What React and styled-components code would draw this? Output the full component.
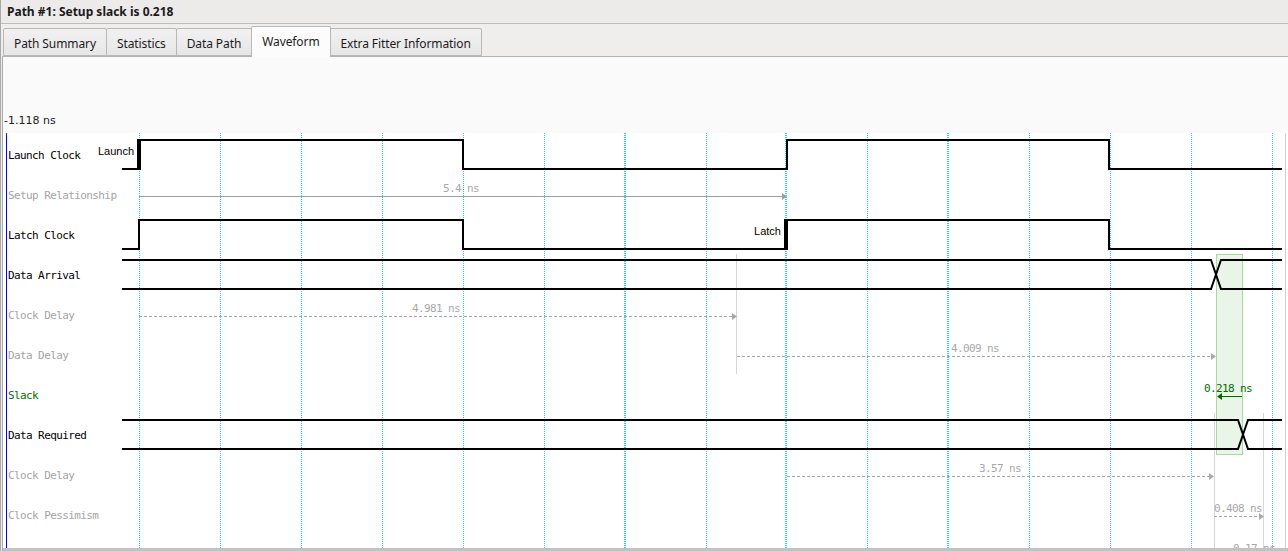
import styled, { createGlobalStyle } from "styled-components";

const GlobalStyle = createGlobalStyle`
  html, body {
    margin: 0;
    padding: 0;
    background: #ffffff;
  }
`;

const tabs = ["Path Summary", "Statistics", "Data Path", "Waveform", "Extra Fitter Information"];

const rows = [
  { name: "Launch Clock", tone: "main" },
  { name: "Setup Relationship", tone: "dim" },
  { name: "Latch Clock", tone: "main" },
  { name: "Data Arrival", tone: "main" },
  { name: "Clock Delay", tone: "dim" },
  { name: "Data Delay", tone: "dim" },
  { name: "Slack", tone: "slack" },
  { name: "Data Required", tone: "main" },
  { name: "Clock Delay", tone: "dim" },
  { name: "Clock Pessimism", tone: "dim" },
];

const toneColor = {
  main: "#000000",
  dim: "#a4a4a4",
  slack: "#007000",
};

// grid is every ~81px starting at the launch edge
const gridX = Array.from({ length: 15 }, (_, k) => Math.round(139 + 80.93 * k));
const majorGrid = [6, 8, 10];

const GREY = "#a8a8a8";
const GREEN = "#006f00";

const Arrow = ({ from, to, y, dashed, color = GREY }) => {
  const dir = to > from ? 1 : -1;
  const end = to - dir * 5;
  return (
    <g>
      <line
        x1={from}
        y1={y + 0.5}
        x2={end}
        y2={y + 0.5}
        stroke={color}
        strokeWidth="1"
        strokeDasharray={dashed ? "3 2" : undefined}
      />
      <polygon
        points={`${end},${y - 3} ${to},${y + 0.5} ${end},${y + 4}`}
        fill={color}
      />
    </g>
  );
};

const Note = ({ x, y, color = GREY, children }) => (
  <WaveText x={x} y={y} fill={color} textAnchor="middle">
    {children}
  </WaveText>
);

const Waves = () => (
  <WaveSvg viewBox="3 133 1285 415" width="1285" height="415">
    {gridX.map((x, k) => (
      <line
        key={x}
        x1={majorGrid.includes(k) ? x : x + 0.5}
        y1="133"
        x2={majorGrid.includes(k) ? x : x + 0.5}
        y2="548"
        stroke="#14dcec"
        strokeWidth={majorGrid.includes(k) ? 2 : 1}
        strokeDasharray="1 1"
      />
    ))}

    {/* slack window */}
    <rect x="1216.5" y="254.5" width="26" height="200" fill="#e9f5e7" stroke="#a8d9a2" />

    {/* markers */}
    <line x1="736.5" y1="254" x2="736.5" y2="374" stroke="#d6d6d6" />
    <line x1="1214.5" y1="413" x2="1214.5" y2="548" stroke="#d6d6d6" />
    <line x1="1263.5" y1="413" x2="1263.5" y2="548" stroke="#d6d6d6" />
    <line x1="1285.5" y1="133" x2="1285.5" y2="548" stroke="#d0d0d0" />

    {/* launch clock */}
    <path
      d="M122 169 H139 V140 H463 V169 H787 V140 H1109 V169 H1282"
      fill="none"
      stroke="#000"
      strokeWidth="2"
    />
    <rect x="137" y="139" width="4" height="31" fill="#000" />
    <WaveLabel x="134" y="155" textAnchor="end">Launch</WaveLabel>

    {/* setup relationship */}
    <Arrow from={139} to={787} y={196} color="#a0a0a0" />
    <Note x={461} y={192}>5.4 ns</Note>

    {/* latch clock */}
    <path
      d="M122 249 H139 V220 H463 V249 H786 V220 H1109 V249 H1282"
      fill="none"
      stroke="#000"
      strokeWidth="2"
    />
    <rect x="784" y="219" width="4" height="31" fill="#000" />
    <WaveLabel x="781" y="235" textAnchor="end">Latch</WaveLabel>

    {/* data arrival */}
    <path d="M122 260 H1211 L1221 289 H1282" fill="none" stroke="#000" strokeWidth="2" />
    <path d="M122 289 H1211 L1221 260 H1282" fill="none" stroke="#000" strokeWidth="2" />

    {/* clock delay / data delay */}
    <Arrow from={139} to={737} y={316} dashed />
    <Note x={436} y={312}>4.981 ns</Note>
    <Arrow from={737} to={1216} y={356} dashed />
    <Note x={975} y={352}>4.009 ns</Note>

    {/* slack */}
    <Arrow from={1242} to={1217} y={396} color={GREEN} />
    <Note x={1228} y={392} color={GREEN}>0.218 ns</Note>

    {/* data required */}
    <path d="M122 420 H1238 L1248 449 H1282" fill="none" stroke="#000" strokeWidth="2" />
    <path d="M122 449 H1238 L1248 420 H1282" fill="none" stroke="#000" strokeWidth="2" />

    <Arrow from={787} to={1214} y={476} dashed />
    <Note x={1000} y={472}>3.57 ns</Note>
    <Arrow from={1214} to={1264} y={516} dashed />
    <Note x={1238} y={512}>0.408 ns</Note>
    <Note x={1251} y={552}>-0.17 ns</Note>
  </WaveSvg>
);

const App = () => {
  return (
    <Window>
      <GlobalStyle />
      <TitleBar>
        <Title>Path #1: Setup slack is 0.218</Title>
      </TitleBar>
      <TabBar>
        {tabs.map((t) => (
          <Tab key={t} $active={t === "Waveform"}>
            {t}
          </Tab>
        ))}
      </TabBar>
      <Panel>
        <Ruler>
          <RulerTime>-1.118 ns</RulerTime>
        </Ruler>
        <Plot>
          <LabelColumn>
            {rows.map((r, i) => (
              <RowLabel key={i} $tone={r.tone}>
                {r.name}
              </RowLabel>
            ))}
          </LabelColumn>
          <Waves />
          <Cursor>
            <svg width="7" height="4" viewBox="0 0 7 4">
              <polygon points="0,0 7,0 3.5,4" fill="#0000ff" />
            </svg>
          </Cursor>
        </Plot>
      </Panel>
    </Window>
  );
};

const Window = styled.div`
  width: 1288px;
  height: 551px;
  overflow: hidden;
  box-sizing: border-box;
  border-left: 1px solid #a9a9a9;
  padding-left: 1px;
  background: #efeeed;
  font-family: "Noto Sans", "Open Sans", sans-serif;
`;

const TitleBar = styled.div`
  height: 23px;
  border-bottom: 1px solid #bdbcbb;
  margin-left: -1px;
  background: #ecebea;
  display: flex;
  align-items: center;
  padding-left: 6px;
`;

const Title = styled.div`
  font-size: 12px;
  font-weight: 700;
  color: #1a1a1a;
`;

const TabBar = styled.div`
  height: 32px;
  display: flex;
  align-items: flex-end;
  padding-left: 1px;
  position: relative;
  z-index: 1;
`;

const Tab = styled.div`
  box-sizing: border-box;
  height: ${(p) => (p.$active ? "31px" : "28px")};
  margin-bottom: ${(p) => (p.$active ? "-1px" : "0")};
  padding: ${(p) => (p.$active ? "0 10px 2px" : "3px 10px 0")};
  border: 1px solid #b8b8b8;
  border-bottom: ${(p) => (p.$active ? "none" : "1px solid #b8b8b8")};
  border-radius: 2px 2px 0 0;
  margin-right: -1px;
  display: flex;
  align-items: center;
  font-size: 12px;
  letter-spacing: -0.1px;
  color: #1c1c1c;
  white-space: nowrap;
  background: ${(p) =>
    p.$active ? "#fcfcfc" : "linear-gradient(#f1f1f1, #e7e7e7)"};
`;

const Panel = styled.div`
  border-top: 1px solid #b3b3b3;
  border-left: 1px solid #a9a9a9;
  background: #fafafa;
`;

const Ruler = styled.div`
  height: 76px;
  display: flex;
  align-items: flex-end;
  padding-bottom: 5px;
  box-sizing: border-box;
`;

const RulerTime = styled.div`
  font-family: "DejaVu Sans", sans-serif;
  font-size: 11px;
  line-height: 14px;
  color: #222;
  padding-left: 1px;
`;

const Plot = styled.div`
  position: relative;
  height: 415px;
  background: #ffffff;
  border-bottom: 3px solid #c2c2c2;
  overflow: hidden;
`;

const LabelColumn = styled.div`
  display: flex;
  flex-direction: column;
  padding-top: 3px;
  padding-left: 5px;
  position: relative;
  z-index: 1;
`;

const RowLabel = styled.div`
  height: 40px;
  line-height: 40px;
  font-family: "DejaVu Sans Mono", monospace;
  font-size: 11px;
  letter-spacing: -0.6px;
  color: ${(p) => toneColor[p.$tone]};
`;

const WaveSvg = styled.svg`
  position: absolute;
  left: 0;
  top: 0;
  display: block;
`;

const WaveText = styled.text`
  font-family: "DejaVu Sans Mono", monospace;
  font-size: 11px;
  letter-spacing: -0.6px;
`;

const WaveLabel = styled.text`
  font-family: "Liberation Sans", Arial, sans-serif;
  font-size: 11px;
  fill: #000;
`;

const Cursor = styled.div`
  position: absolute;
  left: 0px;
  top: -3px;
  bottom: 0;
  width: 7px;
  display: flex;
  flex-direction: column;
  align-items: center;
  z-index: 2;

  svg {
    display: block;
    flex: none;
  }

  &::after {
    content: "";
    flex: 1;
    width: 1.5px;
    background: #0000ff;
  }
`;

export default App;
